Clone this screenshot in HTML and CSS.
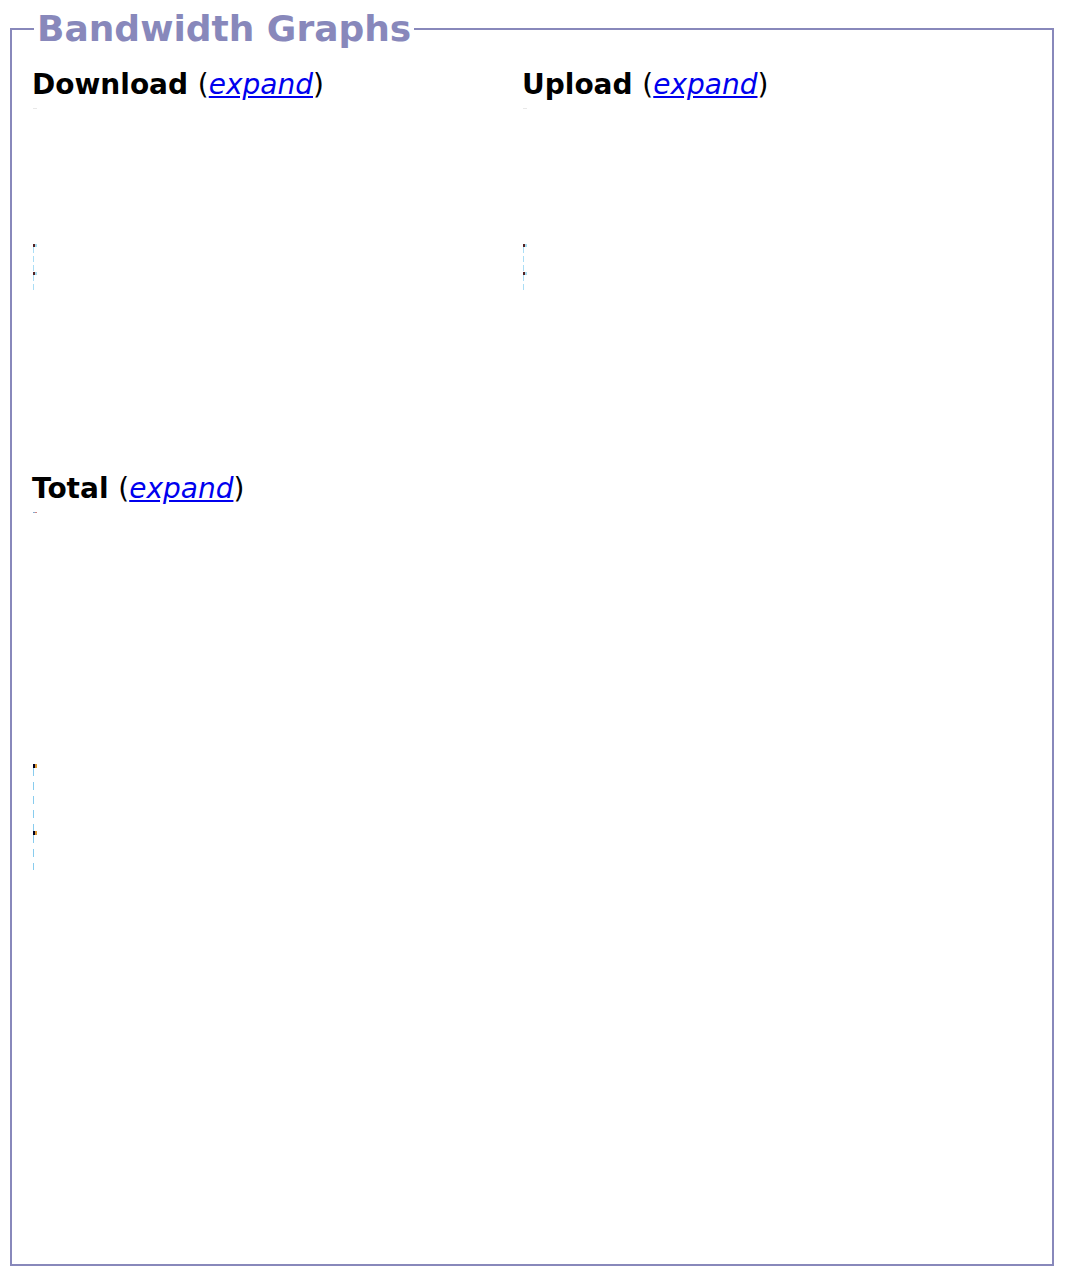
FILE: index.html
```html
<!DOCTYPE html>
<html>
<head>
<meta charset="utf-8">
<title>Bandwidth Graphs</title>
<link rel="stylesheet" href="styles.css">
</head>
<body>
<fieldset class="panel">
  <legend class="panel-title">Bandwidth Graphs</legend>
  <div class="graph-grid">
    <section class="graph">
      <h3 class="graph-title">Download <span class="paren">(<a href="#" class="expand">expand</a>)</span></h3>
      <div class="plot">
        <div class="dash"></div>
        <div class="axis">
          <div class="tick"></div><div class="line"></div>
          <div class="tick"></div><div class="line line-end"></div>
        </div>
      </div>
    </section>
    <section class="graph">
      <h3 class="graph-title">Upload <span class="paren">(<a href="#" class="expand">expand</a>)</span></h3>
      <div class="plot">
        <div class="dash"></div>
        <div class="axis">
          <div class="tick"></div><div class="line"></div>
          <div class="tick"></div><div class="line line-end"></div>
        </div>
      </div>
    </section>
    <section class="graph">
      <h3 class="graph-title">Total <span class="paren">(<a href="#" class="expand">expand</a>)</span></h3>
      <div class="plot plot-large">
        <div class="dash dash-color"></div>
        <div class="axis axis-large">
          <div class="tick tick-dark"></div><div class="line line-long"></div>
          <div class="tick tick-dark"></div><div class="line line-long line-long-end"></div>
        </div>
      </div>
    </section>
  </div>
</fieldset>
</body>
</html>
```

FILE: styles.css
```css
html, body {
  margin: 0;
  padding: 0;
  background: #ffffff;
}

body {
  padding: 8px;
  font-family: "DejaVu Sans", Verdana, sans-serif;
  color: #000000;
}

.panel {
  box-sizing: border-box;
  margin: 0 10px 0 2px;
  border: 2px solid #8888bb;
  padding: 0 21px 0 20px;
  height: 1258px;
}

.panel-title {
  color: #8888bb;
  font-weight: bold;
  font-size: 36px;
  padding: 0 3px;
  margin-left: 2px;
  line-height: 42px;
}

.graph-grid {
  display: grid;
  grid-template-columns: 490px 1fr;
}

.graph-title {
  margin: 0;
  font-size: 28px;
  font-weight: bold;
  line-height: 34px;
  padding-top: 18px;
}

.paren {
  font-weight: normal;
}

.expand {
  color: #0000ee;
  font-style: italic;
  text-decoration: underline;
}

.plot {
  height: 346px;
  padding-top: 6px;
}

.plot-large {
  height: 600px;
}

.dash {
  width: 4px;
  height: 1px;
  margin-left: 1px;
  background: #e8e8e8;
}

.dash-color {
  background: linear-gradient(90deg, #88aacc 0 2px, #cc8888 2px 4px);
}

.axis {
  margin-top: 135px;
  margin-left: 1px;
  width: 4px;
}

.axis-large {
  margin-top: 251px;
}

.tick {
  width: 4px;
  height: 3px;
  background: linear-gradient(90deg, #552222 0 2px, #aaddf0 2px 4px);
}

.tick-dark {
  height: 4px;
  background: linear-gradient(90deg, #000022 0 2px, #dd9933 2px 4px);
}

.line {
  width: 1px;
  height: 25px;
  background: repeating-linear-gradient(180deg, #aaddf5 0 6px, transparent 6px 9px);
}

.line-end {
  height: 15px;
}

.line-long {
  height: 63px;
  background: repeating-linear-gradient(180deg, #88ccee 0 8px, transparent 8px 14px);
}

.line-long-end {
  height: 35px;
}
```
